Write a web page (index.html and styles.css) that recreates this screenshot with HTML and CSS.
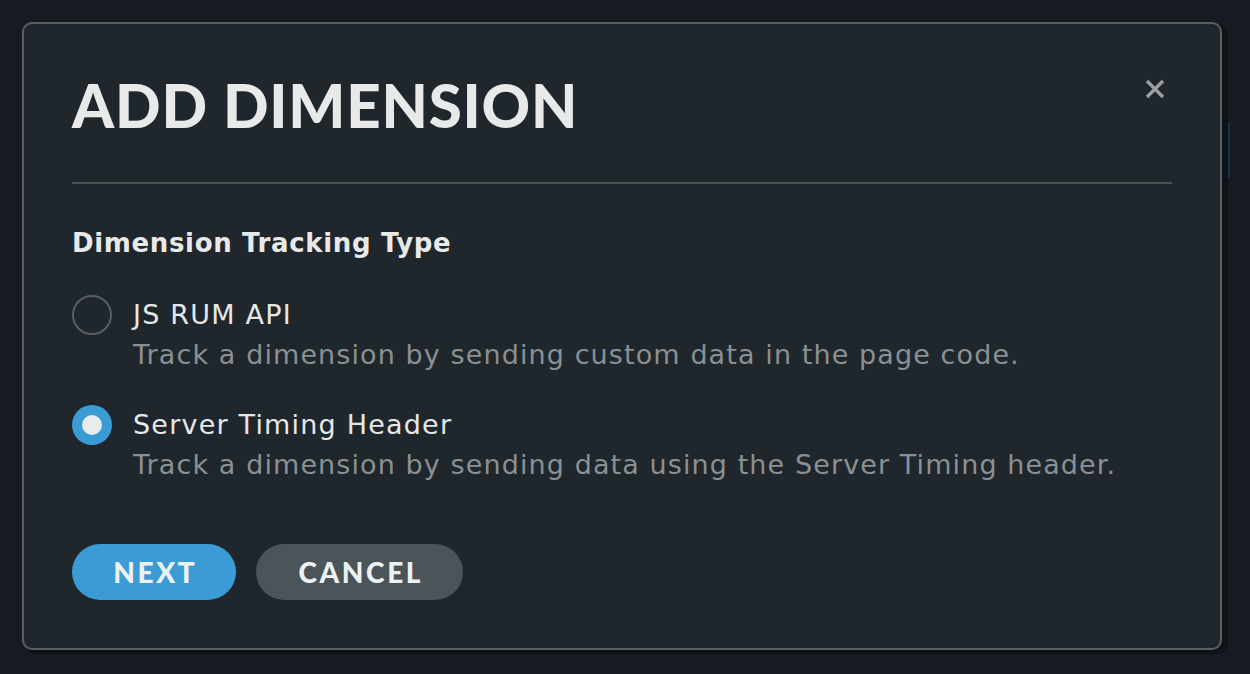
FILE: index.html
```html
<!DOCTYPE html>
<html lang="en">
<head>
<meta charset="utf-8">
<title>Add Dimension</title>
<link rel="stylesheet" href="styles.css">
</head>
<body>
<div class="page-bit"><span class="page-bit-inner"></span></div>
<div class="modal">
  <button class="close" aria-label="Close">
    <svg width="22" height="22" viewBox="0 0 22 22"><path d="M3 3 L19 19 M19 3 L3 19" stroke="#9da1a4" stroke-width="3.2" stroke-linecap="butt"/></svg>
  </button>
  <h1 class="title">ADD DIMENSION</h1>
  <hr class="sep">
  <div class="section-label">Dimension Tracking Type</div>
  <div class="options">
    <label class="option">
      <span class="radio"></span>
      <span class="option-text">
        <span class="option-name">JS RUM API</span>
        <span class="option-desc">Track a dimension by sending custom data in the page code.</span>
      </span>
    </label>
    <label class="option">
      <span class="radio checked"></span>
      <span class="option-text">
        <span class="option-name">Server Timing Header</span>
        <span class="option-desc">Track a dimension by sending data using the Server Timing header.</span>
      </span>
    </label>
  </div>
  <div class="actions">
    <button class="btn btn-primary">NEXT</button>
    <button class="btn btn-secondary">CANCEL</button>
  </div>
</div>
</body>
</html>
```

FILE: styles.css
```css
* { box-sizing: border-box; }
html, body { margin: 0; padding: 0; }
body {
  width: 1250px;
  height: 674px;
  overflow: hidden;
  background: #151b20;
  font-family: "DejaVu Sans", "Open Sans", sans-serif;
  padding: 22px 0 0 22px;
  position: relative;
}
.page-bit {
  position: absolute;
  left: 1222px;
  top: 122px;
  width: 8px;
  height: 56px;
  background: #163444;
}
.page-bit-inner {
  position: absolute;
  left: 2px;
  top: 18px;
  width: 4px;
  height: 22px;
  background: #3b5563;
}
.modal {
  position: relative;
  width: 1200px;
  height: 628px;
  background: #1f262c;
  border: 2px solid #5b5f62;
  border-radius: 10px;
  padding: 51px 48px 0 48px;
  box-shadow: 5px 3px 0 1px #0e1317;
}
.close {
  position: absolute;
  top: 54px;
  right: 54px;
  width: 22px;
  height: 22px;
  padding: 0;
  border: 0;
  background: none;
  display: flex;
}
.title {
  margin: 0;
  font-family: "Lato", sans-serif;
  font-size: 60px;
  line-height: 60px;
  font-weight: 900;
  letter-spacing: 0.8px;
  color: #e8eaea;
}
.sep {
  margin: 47px 0 0 0;
  border: 0;
  height: 2px;
  background: #4d5255;
}
.section-label {
  margin-top: 39px;
  font-size: 26px;
  line-height: 40px;
  font-weight: 700;
  letter-spacing: 0.65px;
  color: #e8eaea;
}
.options {
  margin-top: 32px;
  display: flex;
  flex-direction: column;
  gap: 30px;
}
.option {
  display: flex;
  align-items: flex-start;
  gap: 21px;
}
.radio {
  width: 40px;
  height: 40px;
  border-radius: 50%;
  border: 2px solid #5a5e61;
  flex: none;
  position: relative;
}
.radio.checked {
  border: 0;
  background: #3a9bd5;
}
.radio.checked::after {
  content: "";
  position: absolute;
  left: 10px;
  top: 10px;
  width: 20px;
  height: 20px;
  border-radius: 50%;
  background: #e9ecec;
}
.option-text {
  display: flex;
  flex-direction: column;
}
.option-name {
  font-size: 27px;
  line-height: 40px;
  letter-spacing: 1.2px;
  color: #e6e8e8;
}
.option-desc {
  font-size: 27px;
  line-height: 40px;
  letter-spacing: 1.1px;
  color: #8b9093;
}
.actions {
  margin-top: 59px;
  display: flex;
  gap: 20px;
}
.btn {
  height: 56px;
  border: 0;
  border-radius: 28px;
  font-family: "Lato", sans-serif;
  font-size: 28px;
  font-weight: 900;
  letter-spacing: 2.6px;
  text-indent: 2.6px;
  color: #eef1f2;
  padding: 0;
}
.btn-primary {
  width: 164px;
  background: #3a9bd5;
}
.btn-secondary {
  width: 207px;
  background: #4a5459;
}
```
